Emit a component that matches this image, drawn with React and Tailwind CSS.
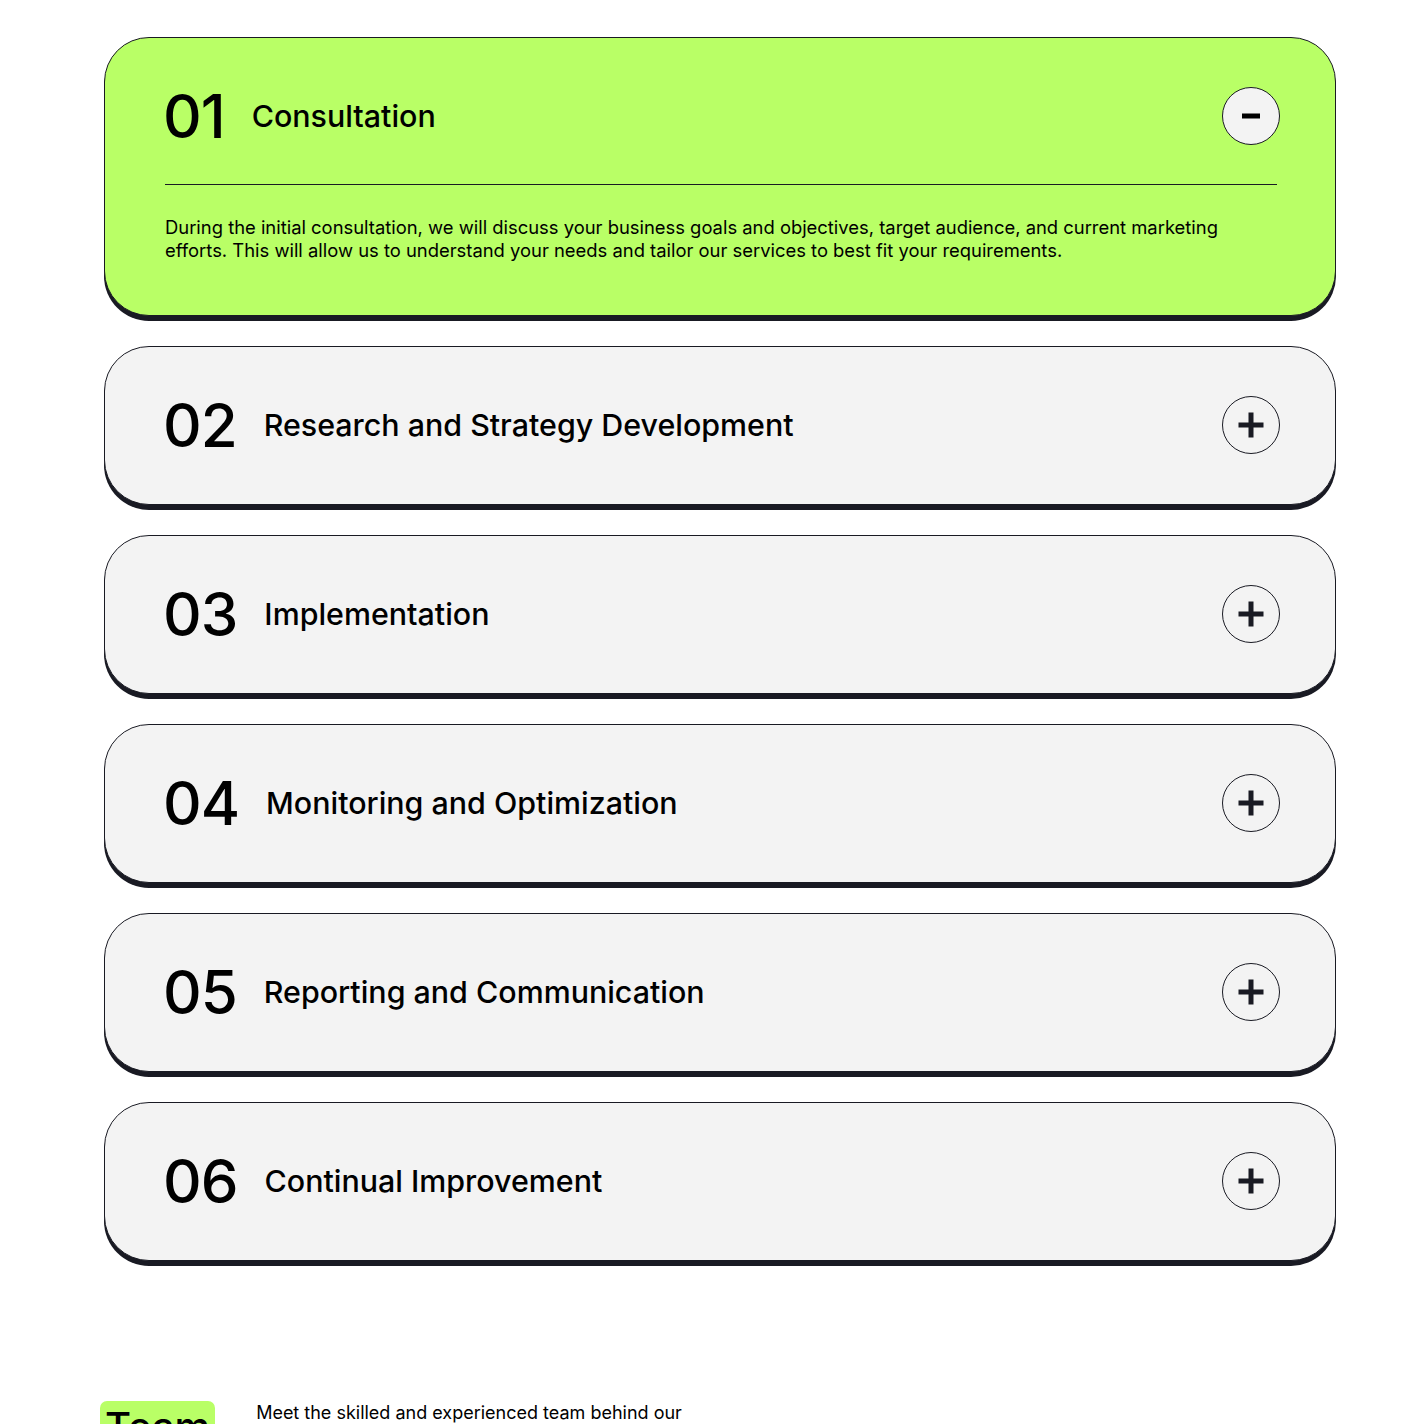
import { useState } from 'react';

const steps = [
  {
    num: '01',
    title: 'Consultation',
    body: 'During the initial consultation, we will discuss your business goals and objectives, target audience, and current marketing efforts. This will allow us to understand your needs and tailor our services to best fit your requirements.',
  },
  { num: '02', title: 'Research and Strategy Development', body: '' },
  { num: '03', title: 'Implementation', body: '' },
  { num: '04', title: 'Monitoring and Optimization', body: '' },
  { num: '05', title: 'Reporting and Communication', body: '' },
  { num: '06', title: 'Continual Improvement', body: '' },
];

function ToggleIcon({ open }) {
  return (
    <span className="flex h-[58px] w-[58px] shrink-0 items-center justify-center rounded-full border border-[#191A23] bg-[#F3F3F3]">
      <svg width="26" height="26" viewBox="0 0 26 26" fill="none">
        {open ? (
          <rect x="4" y="10.5" width="18" height="5" fill="#000" />
        ) : (
          <>
            <rect x="0.5" y="10.5" width="25" height="5" fill="#191A23" />
            <rect x="10.5" y="0.5" width="5" height="25" fill="#191A23" />
          </>
        )}
      </svg>
    </span>
  );
}

function StepCard({ step, open, onToggle }) {
  return (
    <div
      className={`w-[1232px] rounded-[45px] border border-[#191A23] shadow-[0_5px_0_#191A23] pl-[60px] pr-[55px] ${
        open ? 'bg-[#B9FF66] pb-[53px]' : 'bg-[#F3F3F3]'
      }`}
    >
      <button
        onClick={onToggle}
        className={`flex w-full items-center justify-between pt-[48px] text-left ${open ? 'pb-[38px]' : 'pb-[49px]'}`}
      >
        <div className="flex items-center gap-[27px]">
          <span className="-ml-[2px] text-[60px] font-medium leading-[60px] tracking-[-1px] text-black">{step.num}</span>
          <span className="text-[30.4px] font-medium leading-[40px] text-black">{step.title}</span>
        </div>
        <ToggleIcon open={open} />
      </button>
      {open && (
        <div className="pr-[3px]">
          <div className="h-px w-full bg-[#191A23]" />
          <p className="mt-[31px] w-[1080px] text-[18.4px] leading-[23px] text-black">{step.body}</p>
        </div>
      )}
    </div>
  );
}

export default function App() {
  const [openIdx, setOpenIdx] = useState(0);

  return (
    <div className="min-h-screen bg-white font-['Inter',sans-serif]">
      <div className="pl-[104px] pt-[37px] flex flex-col gap-[30px]">
        {steps.map((s, i) => (
          <StepCard
            key={s.num}
            step={s}
            open={openIdx === i}
            onToggle={() => setOpenIdx(openIdx === i ? -1 : i)}
          />
        ))}
      </div>

      <div className="mt-[140px] flex items-start gap-[41px] pl-[100px] h-[160px]">
        <span className="rounded-[7px] bg-[#B9FF66] px-[5px] text-[40px] font-medium leading-[51px] text-black">Team</span>
        <p className="w-[460px] text-[18px] leading-[23px] text-black">
          Meet the skilled and experienced team behind our successful digital marketing strategies
        </p>
      </div>
    </div>
  );
}
